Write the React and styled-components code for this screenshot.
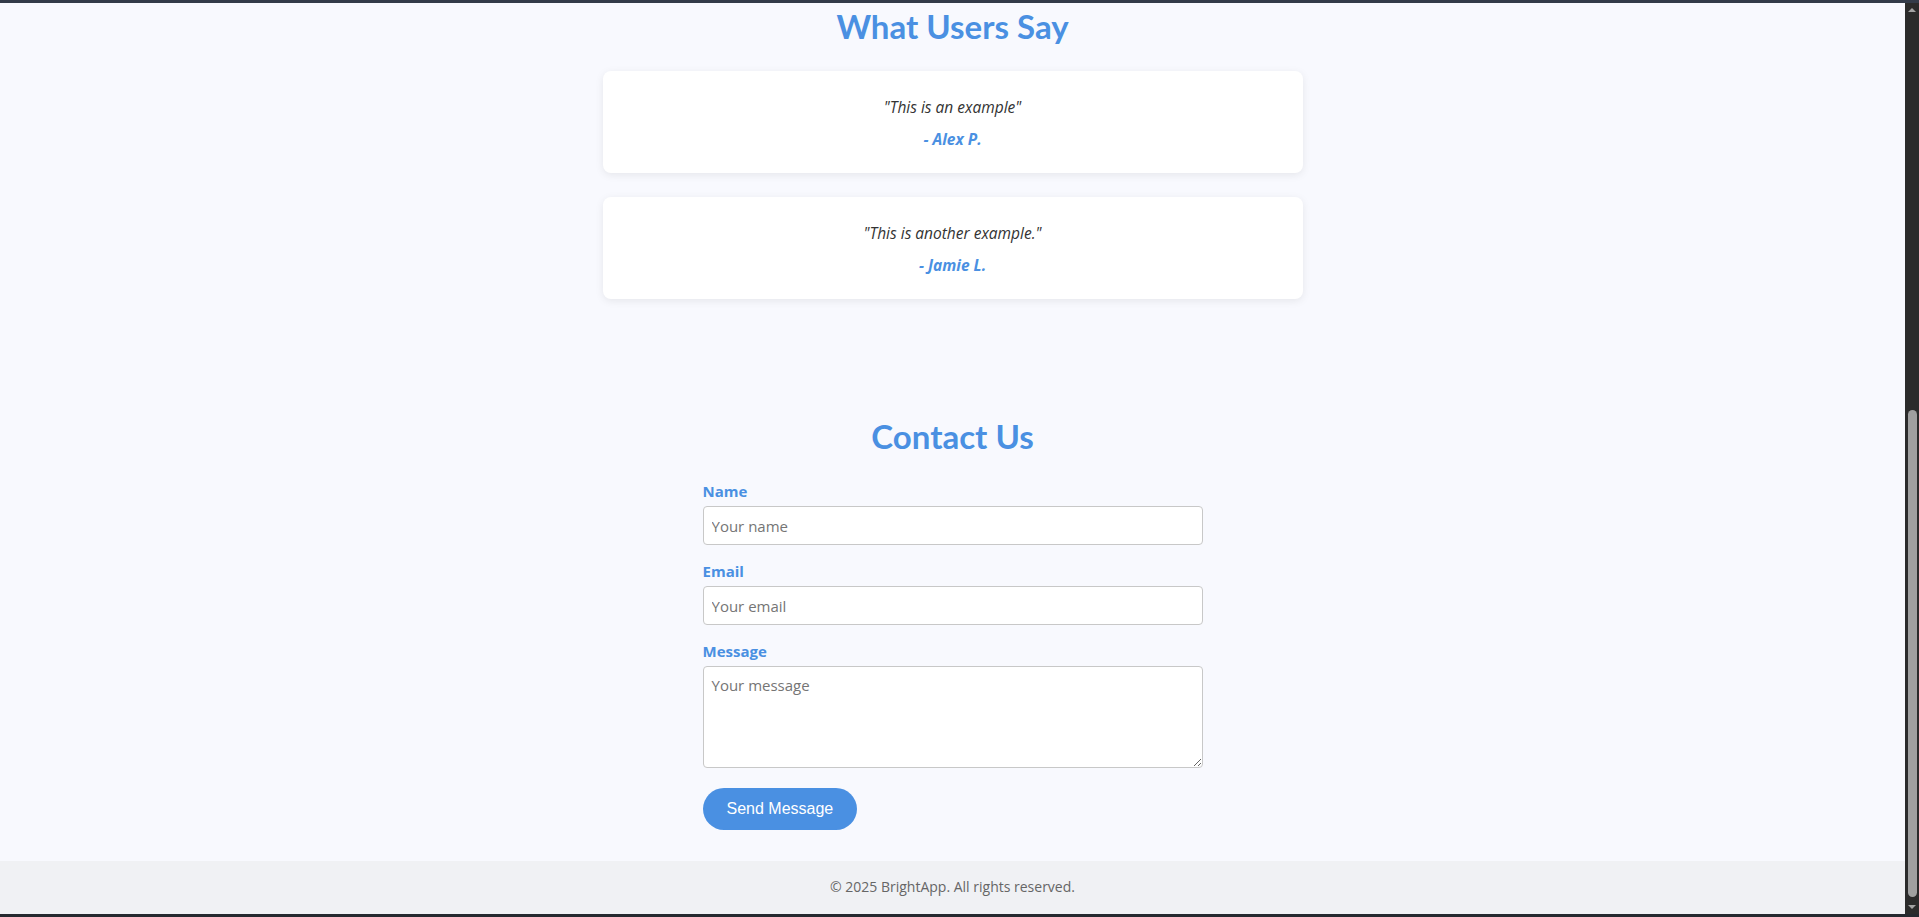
import React from 'react';
import styled, { createGlobalStyle } from 'styled-components';

const Global = createGlobalStyle`
  html, body {
    margin: 0;
    padding: 0;
    height: 100%;
    overflow: hidden;
  }
  body {
    font-family: "Open Sans", "Noto Sans", sans-serif;
    background: #f8f9fe;
  }
`;

const testimonials = [
	{ quote: '"This is an example"', author: '- Alex P.' },
	{ quote: '"This is another example."', author: '- Jamie L.' },
];

const App = () => {
	return (
		<Frame>
			<Global />
			<Edge />
			<Middle>
				<Page>
					<Main>
						<Testimonials>
							<Heading>What Users Say</Heading>
							<CardList>
								{testimonials.map((t) => (
									<Card key={t.author}>
										<Quote>{t.quote}</Quote>
										<Author>{t.author}</Author>
									</Card>
								))}
							</CardList>
						</Testimonials>
						<Contact>
							<Heading>Contact Us</Heading>
							<Form onSubmit={(e) => e.preventDefault()}>
								<Group>
									<Label htmlFor="name">Name</Label>
									<Input id="name" type="text" placeholder="Your name" />
								</Group>
								<Group>
									<Label htmlFor="email">Email</Label>
									<Input id="email" type="email" placeholder="Your email" />
								</Group>
								<Group>
									<Label htmlFor="message">Message</Label>
									<TextArea id="message" placeholder="Your message" />
								</Group>
								<SendButton type="submit">Send Message</SendButton>
							</Form>
						</Contact>
					</Main>
					<Footer>© 2025 BrightApp. All rights reserved.</Footer>
				</Page>
				<Scrollbar>
					<Arrow $up />
					<Spacer />
					<Thumb />
					<Arrow />
				</Scrollbar>
			</Middle>
			<Edge $bottom />
		</Frame>
	);
};

const Frame = styled.div`
display: flex;
flex-direction: column;
height: 100vh;
`;
const Edge = styled.div`
height: 3px;
flex: none;
background: ${(p) => (p.$bottom ? '#25292f' : '#333b49')};
`;
const Middle = styled.div`
flex: 1;
display: flex;
min-height: 0;
`;
const Page = styled.div`
flex: 1;
display: flex;
flex-direction: column;
background: #f8f9fe;
`;
const Main = styled.main`
flex: 1;
`;
const Testimonials = styled.section`
padding-top: 3px;
`;
const Heading = styled.h2`
margin: 0 0 24px;
text-align: center;
font-family: Lato, "Open Sans", sans-serif;
font-size: 33px;
line-height: 41px;
font-weight: 700;
color: #4a90e2;
`;
const CardList = styled.div`
width: 700px;
margin: 0 auto;
display: flex;
flex-direction: column;
gap: 24px;
`;
const Card = styled.div`
background: #fff;
border-radius: 8px;
padding: 24px;
text-align: center;
box-shadow: 0 2px 8px rgba(0, 0, 0, 0.08);
`;
const Quote = styled.p`
margin: 0;
font-size: 15.5px;
line-height: 24px;
font-style: italic;
color: #333;
`;
const Author = styled.p`
margin: 10px 0 0;
font-size: 15.5px;
line-height: 20px;
font-style: italic;
font-weight: 700;
color: #4a90e2;
`;
const Contact = styled.section`
padding-top: 117px;
padding-bottom: 31px;
`;
const Form = styled.form`
width: 500px;
margin: 0 auto;
`;
const Group = styled.div`
margin-bottom: 16px;
`;
const Label = styled.label`
display: block;
margin-bottom: 5px;
font-size: 15px;
line-height: 20px;
font-weight: 700;
color: #4a90e2;
`;
const Input = styled.input`
display: block;
box-sizing: border-box;
width: 100%;
height: 39px;
padding: 0 8px;
border: 1px solid #c8c8c8;
border-radius: 4px;
background: #fff;
font-family: inherit;
font-size: 15px;
color: #333;
&::placeholder {
	color: #757575;
}
`;
const TextArea = styled.textarea`
display: block;
box-sizing: border-box;
width: 100%;
height: 102px;
padding: 8px;
border: 1px solid #c8c8c8;
border-radius: 4px;
background: #fff;
font-family: inherit;
font-size: 15px;
line-height: 20px;
color: #333;
resize: vertical;
&::placeholder {
	color: #757575;
}
`;
const SendButton = styled.button`
margin-top: 4px;
padding: 12px 24px;
border: none;
border-radius: 999px;
background: #4a90e2;
color: #fff;
font-family: "Liberation Sans", Arial, sans-serif;
font-size: 16px;
line-height: 18px;
cursor: pointer;
`;
const Footer = styled.footer`
padding: 16px 0 17px;
background: #f0f1f4;
text-align: center;
font-size: 14px;
line-height: 20px;
color: #666;
`;
const Scrollbar = styled.div`
width: 14px;
flex: none;
display: flex;
flex-direction: column;
align-items: center;
background: #2b2b2b;
`;
const Arrow = styled.div`
height: 14px;
width: 100%;
display: flex;
align-items: center;
justify-content: center;
&::before {
	content: '';
	border-left: 4px solid transparent;
	border-right: 4px solid transparent;
	${(p) => (p.$up ? 'border-bottom: 4px solid #a3a3a3;' : 'border-top: 4px solid #a3a3a3;')}
}
`;
const Spacer = styled.div`
flex: 1;
`;
const Thumb = styled.div`
width: 9px;
height: 487px;
margin-bottom: 3px;
border-radius: 5px;
background: #a0a0a0;
`;

export default App;
